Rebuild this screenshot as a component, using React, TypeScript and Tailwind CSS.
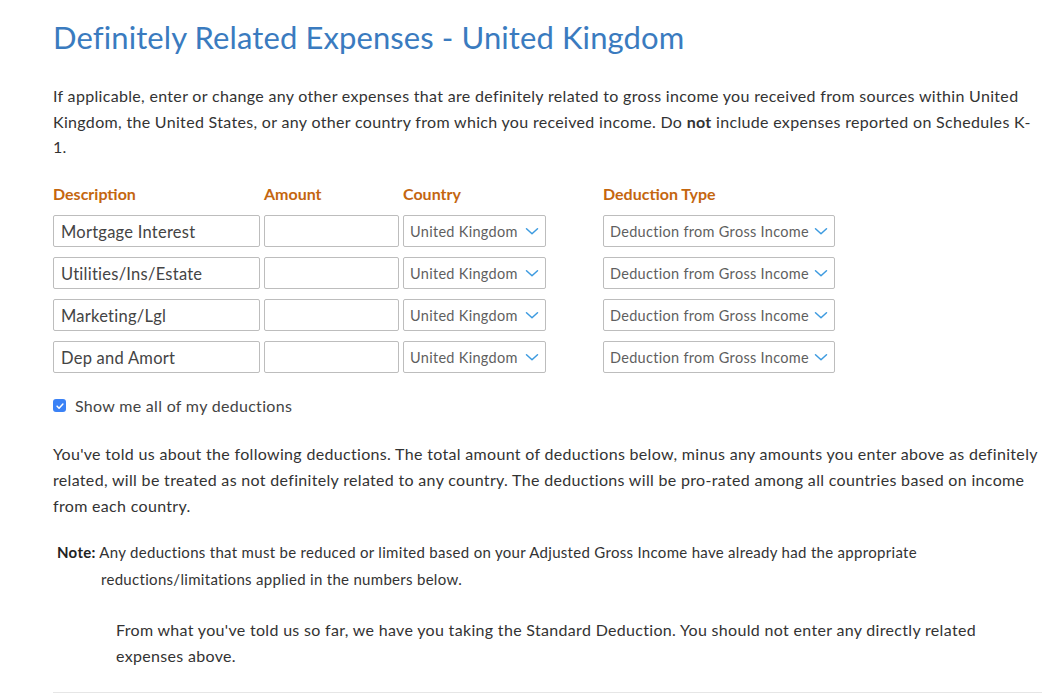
const rows = ['Mortgage Interest', 'Utilities/Ins/Estate', 'Marketing/Lgl', 'Dep and Amort'];

function Chevron() {
  return (
    <svg viewBox="0 0 14 9" className="w-[14px] h-[9px]">
      <path d="M1.5 1.8l5.5 5 5.5-5" fill="none" stroke="#3d9be0" strokeWidth="1.5" strokeLinecap="round" strokeLinejoin="round" />
    </svg>
  );
}

function Select({ value, width }: { value: string; width: string }) {
  return (
    <div
      className={`${width} h-[32px] border border-[#bdbdbd] rounded-[2px] flex items-center justify-between pl-[6px] pr-[6px] pt-[2px] text-[14.5px] tracking-[0.3px] text-[#5f5f5f] bg-white`}
    >
      <span>{value}</span>
      <Chevron />
    </div>
  );
}

export default function App() {
  return (
    <div
      className="bg-white w-[1059px] h-[694px] overflow-hidden pl-[53px] pr-[17px] text-[#333]"
      style={{ fontFamily: 'Lato, "Noto Sans", sans-serif' }}
    >
      <h1 className="pt-[17px] text-[31px] leading-[40px] text-[#3a7bbf] tracking-[0.1px]">
        Definitely Related Expenses - United Kingdom
      </h1>

      <p className="mt-[26px] text-[16px] leading-[25.5px] tracking-[0.32px] text-[#333]">
        If applicable, enter or change any other expenses that are definitely related to gross income you received from
        sources within United Kingdom, the United States, or any other country from which you received income. Do{' '}
        <b>not</b> include expenses reported on Schedules K-1.
      </p>

      {/* Expense grid */}
      <div className="mt-[22px]">
        <div className="flex text-[16px] font-bold text-[#c4660f] h-[24px] items-center">
          <div className="w-[211px]">Description</div>
          <div className="w-[139px]">Amount</div>
          <div className="w-[200px]">Country</div>
          <div>Deduction Type</div>
        </div>
        <div className="mt-[9px] flex flex-col gap-[10px]">
          {rows.map((r) => (
            <div key={r} className="flex items-center">
              <div className="w-[207px] h-[32px] border border-[#bdbdbd] rounded-[2px] flex items-center px-[7px] pt-[3px] text-[16.5px] tracking-[0.25px] text-[#444]">
                {r}
              </div>
              <div className="ml-[4px] w-[135px] h-[32px] border border-[#bdbdbd] rounded-[2px]" />
              <div className="ml-[4px]">
                <Select value="United Kingdom" width="w-[143px]" />
              </div>
              <div className="ml-[57px]">
                <Select value="Deduction from Gross Income" width="w-[232px]" />
              </div>
            </div>
          ))}
        </div>
      </div>

      <label className="mt-[21px] flex items-center gap-[9px] text-[16px] tracking-[0.3px] text-[#444]">
        <span className="w-[13px] h-[13px] rounded-[3px] bg-[#3b82f6] flex items-center justify-center">
          <svg viewBox="0 0 12 12" className="w-[10px] h-[10px]">
            <path d="M2.5 6.2l2.4 2.4 4.6-5" fill="none" stroke="white" strokeWidth="1.8" strokeLinecap="round" strokeLinejoin="round" />
          </svg>
        </span>
        <span>Show me all of my deductions</span>
      </label>

      <p className="mt-[23px] text-[16px] leading-[26px] tracking-[0.32px]">
        You've told us about the following deductions. The total amount of deductions below, minus any amounts you enter
        above as definitely related, will be treated as not definitely related to any country. The deductions will be
        pro-rated among all countries based on income from each country.
      </p>

      <p className="mt-[20px] pl-[48px] -indent-[44px] text-[15px] leading-[27px] tracking-[0.3px] pr-[60px]">
        <b className="text-[#222]">Note:</b> Any deductions that must be reduced or limited based on your Adjusted Gross
        Income have already had the appropriate reductions/limitations applied in the numbers below.
      </p>

      <p className="mt-[24px] pl-[63px] pr-[40px] text-[16px] leading-[26px] tracking-[0.32px]">
        From what you've told us so far, we have you taking the Standard Deduction. You should not enter any directly
        related expenses above.
      </p>

      <div className="mt-[23px] border-t border-[#e6e6e6]" />
    </div>
  );
}
